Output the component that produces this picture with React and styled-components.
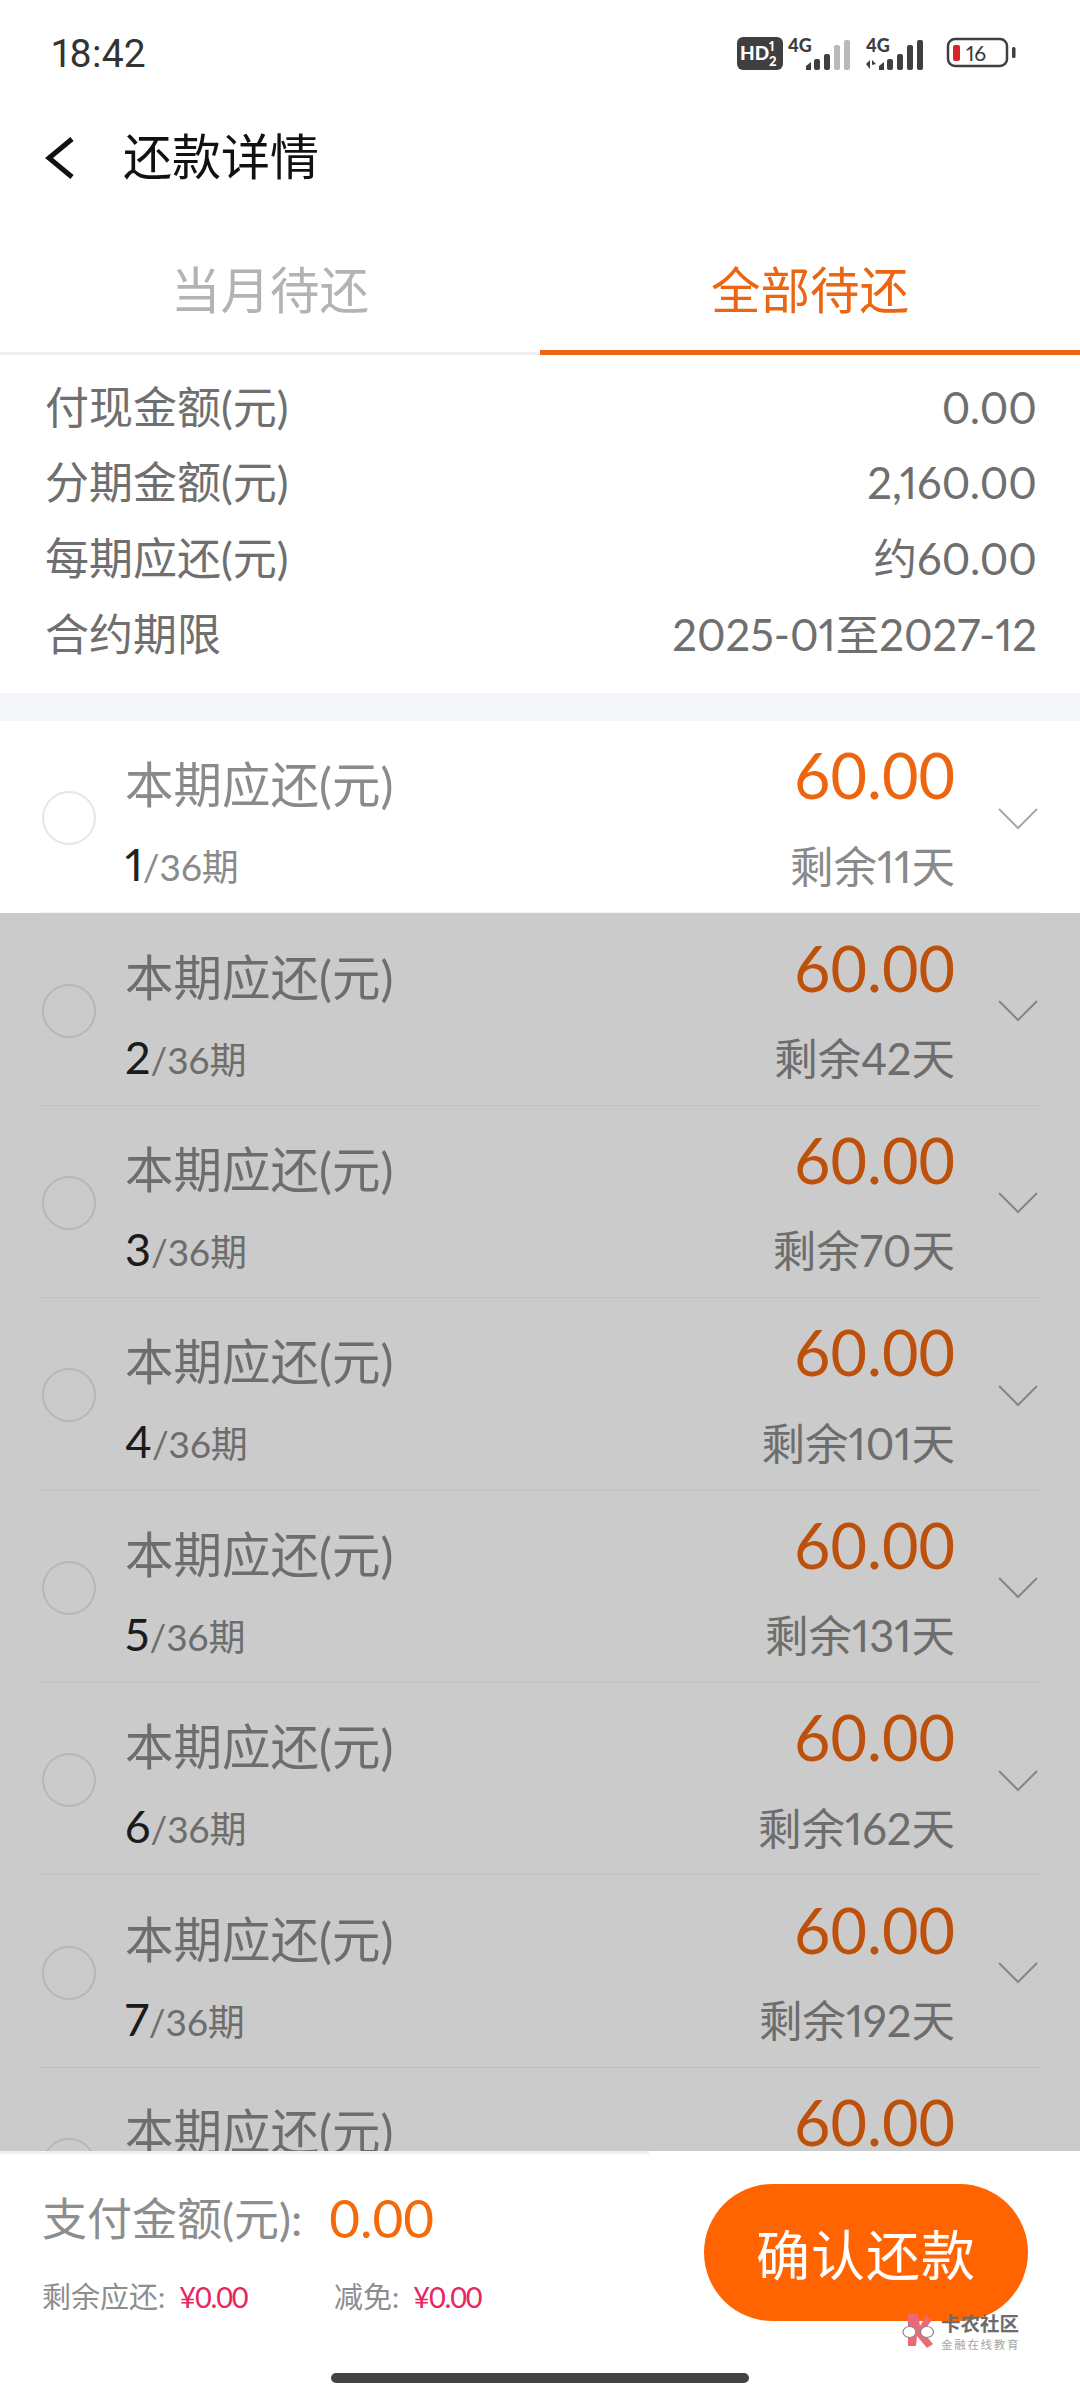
import React from "react";
import styled, { createGlobalStyle } from "styled-components";

const Global = createGlobalStyle`
  html, body { margin: 0; padding: 0; background: #fff; }
  * { box-sizing: border-box; }
`;

const FONT = `"Lato", "Noto Sans CJK SC", sans-serif`;

const Page = styled.div`
  position: relative;
  width: 1080px;
  height: 2400px;
  display: flex;
  flex-direction: column;
  overflow: hidden;
  background: #fff;
  font-family: ${FONT};
  font-variant-numeric: proportional-nums;
`;

const StatusBar = styled.div`
  height: 108px;
  flex: none;
  display: flex;
  align-items: center;
  justify-content: space-between;
  padding: 0 64px 0 52px;
`;

const Clock = styled.span`
  font-family: "Roboto", sans-serif;
  font-size: 39px;
  color: #333;
  letter-spacing: 0.2px;
`;

const StatusSvg = styled.svg`
  display: block;
  flex: none;
`;

const NavBar = styled.div`
  height: 98px;
  flex: none;
  display: flex;
  align-items: center;
  padding-left: 45px;
  gap: 48px;
`;

const NavTitle = styled.span`
  font-size: 49px;
  line-height: 60px;
  color: #111;
  margin-top: -2px;
`;

const BackIcon = styled.svg`
  display: block;
  flex: none;
  margin-top: 2px;
`;

const Tabs = styled.div`
  height: 149px;
  flex: none;
  display: flex;
  align-items: stretch;
`;

const Tab = styled.div`
  width: 50%;
  padding-top: 52px;
  text-align: center;
  font-size: 49.5px;
  line-height: 64px;
  color: ${(p) => (p.$active ? "#ec6513" : "#b3b3b3")};
  border-bottom: ${(p) => (p.$active ? "5px solid #ec6513" : "3px solid #f0f0f0")};
`;

const Summary = styled.div`
  flex: none;
  height: 338px;
  padding: 14px 43px 0 45px;
`;

const SummaryRow = styled.div`
  height: 75.6px;
  display: flex;
  align-items: center;
  justify-content: space-between;
  font-size: 44px;
  line-height: 56px;
  color: #6f6f6f;
`;

const SummaryValue = styled.span`
  font-size: 43.5px;
`;

const Band = styled.div`
  height: 28px;
  flex: none;
  background: #f4f6f9;
`;

const ListArea = styled.div`
  position: relative;
  flex: 1;
  min-height: 0;
  overflow: hidden;
`;

const Dim = styled.div`
  position: absolute;
  inset: 192px 0 0 0;
  background: rgba(0, 0, 0, 0.205);
`;

const Row = styled.div`
  position: relative;
  height: 192.4px;
  display: flex;
  align-items: center;
  padding: 0 42px;
  &::after {
    content: "";
    position: absolute;
    left: 40px;
    right: 40px;
    bottom: 0;
    height: 1px;
    background: #f2f2f2;
  }
`;

const Radio = styled.span`
  flex: none;
  width: 54px;
  height: 54px;
  margin-top: 2px;
  border-radius: 50%;
  border: 2px solid #e6e6e6;
  background: #fff;
`;

const RowMain = styled.div`
  flex: 1;
  margin-left: 29px;
  display: flex;
  flex-direction: column;
`;

const RowLine = styled.div`
  display: flex;
  align-items: center;
  justify-content: space-between;
  height: ${(p) => p.$h}px;
`;

const RowLabel = styled.span`
  font-size: 48.5px;
  line-height: 60px;
  color: #8a8a8a;
  margin-top: 10px;
`;

const RowAmount = styled.span`
  font-size: 63px;
  line-height: 70px;
  font-weight: 400;
  font-variant-numeric: tabular-nums;
  color: #ee650f;
  margin-top: -8px;
  margin-right: -1px;
`;

const Period = styled.span`
  font-size: 37px;
  line-height: 50px;
  color: #8a8a8a;
  margin-top: 13px;
  b {
    font-weight: 400;
    font-size: 45px;
    color: #222;
  }
`;

const Remain = styled.span`
  font-size: 43.5px;
  line-height: 54px;
  color: #8a8a8a;
  margin-top: 13px;
  margin-right: -1px;
`;

const Chevron = styled.svg`
  flex: none;
  width: 40px;
  height: 22px;
  margin-left: 44px;
  margin-top: 3px;
`;

const Footer = styled.div`
  position: relative;
  flex: none;
  height: 249px;
  padding-top: 33px;
  background: #fff;
`;

const FooterRule = styled.div`
  position: absolute;
  left: 0;
  top: 0;
  width: 649px;
  height: 3px;
  background: #efefef;
`;

const FooterBody = styled.div`
  height: 137px;
  display: flex;
  align-items: flex-start;
  justify-content: space-between;
  padding: 0 52px 0 42px;
`;

const FooterInfo = styled.div`
  display: flex;
  flex-direction: column;
`;

const PayLine = styled.div`
  height: 70px;
  display: flex;
  align-items: center;
`;

const PayLabel = styled.span`
  font-size: 45px;
  line-height: 56px;
  color: #8d8d8d;
`;

const PayAmount = styled.span`
  font-size: 53px;
  line-height: 66px;
  font-variant-numeric: tabular-nums;
  color: #f46a08;
  margin-left: 27px;
  margin-top: -2px;
`;

const SubLine = styled.div`
  display: flex;
  height: 86px;
  align-items: center;
  font-size: 29px;
  line-height: 40px;
  color: #8d8d8d;
`;

const SubItem = styled.span`
  width: 292px;
  display: inline-flex;
  gap: 14px;
`;

const Money = styled.span`
  color: #e6285f;
  font-variant-numeric: tabular-nums;
  letter-spacing: -1.2px;
`;

const ConfirmButton = styled.button`
  width: 324px;
  height: 137px;
  border: 0;
  border-radius: 69px;
  background: #ff6400;
  color: #fff;
  font-family: ${FONT};
  font-size: 54px;
  letter-spacing: 1px;
  padding: 0;
`;

const HomeBar = styled.div`
  width: 418px;
  height: 10px;
  margin: 52px auto 0;
  border-radius: 5px;
  background: #444;
`;

const Stamp = styled.div`
  position: absolute;
  left: 902px;
  top: 2313px;
  display: flex;
  gap: 5px;
  pointer-events: none;
`;

const StampText = styled.div`
  display: flex;
  flex-direction: column;
  line-height: 1;
`;

const StampName = styled.span`
  font-size: 19.5px;
  font-weight: 700;
  color: #6c6c6c;
  margin-top: 1px;
`;

const StampSub = styled.span`
  font-size: 11.5px;
  letter-spacing: 1.7px;
  color: #a5a5a5;
  margin-top: 5px;
`;

function StatusIcons() {
  const bar = (x, h, fill) => <rect key={x} x={x} y={34 - h} width="6" height={h} rx="2" fill={fill} />;
  return (
    <StatusSvg width="279" height="44" viewBox="0 -4 279 44">
      <rect x="0" y="1" width="46" height="33" rx="6" fill="#3f3f3f" />
      <text x="3" y="24" fontFamily="Lato, sans-serif" fontWeight="900" fontSize="19" fill="#fff">HD</text>
      <text x="32" y="15" fontFamily="Lato, sans-serif" fontWeight="900" fontSize="13" fill="#fff">1</text>
      <text x="32" y="30" fontFamily="Lato, sans-serif" fontWeight="900" fontSize="13" fill="#fff">2</text>
      <text x="51" y="16" fontFamily="Lato, sans-serif" fontWeight="900" fontSize="18" fill="#3f3f3f">4G</text>
      <path d="M69 34v-4l5-4v8z" fill="#3f3f3f" />
      {bar(77, 11, "#3f3f3f")}
      {bar(87, 16, "#3f3f3f")}
      {bar(97, 25, "#b9b9b9")}
      {bar(107, 30, "#b9b9b9")}
      <text x="129" y="16" fontFamily="Lato, sans-serif" fontWeight="900" fontSize="18" fill="#3f3f3f">4G</text>
      <path d="M129 28l4-4v9zM135 24l4 4-4 1v4z" fill="#3f3f3f" />
      <path d="M142 34v-4l5-4v8z" fill="#3f3f3f" />
      {bar(150, 11, "#3f3f3f")}
      {bar(160, 16, "#3f3f3f")}
      {bar(170, 25, "#3f3f3f")}
      {bar(180, 30, "#3f3f3f")}
      <rect x="211" y="3" width="59" height="27" rx="7" fill="none" stroke="#3f3f3f" strokeWidth="2.5" />
      <rect x="216" y="9" width="7" height="16" rx="2" fill="#d8232a" />
      <text x="229" y="25" fontFamily="Lato, sans-serif" fontSize="21" fill="#3a3a3a">16</text>
      <rect x="275" y="11" width="3.5" height="11" rx="1.5" fill="#3f3f3f" />
    </StatusSvg>
  );
}

function BackArrow() {
  return (
    <BackIcon width="30" height="44" viewBox="0 0 30 44">
      <path d="M27 3L4 22l23 19" fill="none" stroke="#111" strokeWidth="5" />
    </BackIcon>
  );
}

function StampLogo() {
  return (
    <svg width="34" height="35" viewBox="0 0 34 35">
      <path d="M6 1h10l2 12 6-10 6 4-9 12 10 12-6 4-10-12-1 10H6z" fill="#ea6a78" />
      <ellipse cx="7.5" cy="19" rx="6.5" ry="5.5" fill="#fff" stroke="#888" strokeWidth="1.2" />
      <ellipse cx="25" cy="19" rx="6.5" ry="5.5" fill="#fff" stroke="#888" strokeWidth="1.2" />
    </svg>
  );
}

const SUMMARY = [
  ["付现金额(元)", "0.00"],
  ["分期金额(元)", "2,160.00"],
  ["每期应还(元)", "约60.00"],
  ["合约期限", "2025-01至2027-12"],
];

const DAYS = [11, 42, 70, 101, 131, 162, 192, 223];

export default function App() {
  return (
    <Page>
      <Global />
      <StatusBar>
        <Clock>18:42</Clock>
        <StatusIcons />
      </StatusBar>
      <NavBar>
        <BackArrow />
        <NavTitle>还款详情</NavTitle>
      </NavBar>
      <Tabs>
        <Tab>当月待还</Tab>
        <Tab $active>全部待还</Tab>
      </Tabs>
      <Summary>
        {SUMMARY.map(([label, value]) => (
          <SummaryRow key={label}>
            <span>{label}</span>
            <SummaryValue>{value}</SummaryValue>
          </SummaryRow>
        ))}
      </Summary>
      <Band />
      <ListArea>
        {DAYS.map((d, i) => (
          <Row key={d}>
            <Radio />
            <RowMain>
              <RowLine $h={84}>
                <RowLabel>本期应还(元)</RowLabel>
                <RowAmount>60.00</RowAmount>
              </RowLine>
              <RowLine $h={76}>
                <Period>
                  <b>{i + 1}</b>/36期
                </Period>
                <Remain>剩余{d}天</Remain>
              </RowLine>
            </RowMain>
            <Chevron viewBox="0 0 40 22">
              <path d="M1 1l19 19L39 1" fill="none" stroke="#a8a8a8" strokeWidth="2" />
            </Chevron>
          </Row>
        ))}
        <Dim />
      </ListArea>
      <Footer>
        <FooterRule />
        <FooterBody>
          <FooterInfo>
            <PayLine>
              <PayLabel>支付金额(元):</PayLabel>
              <PayAmount>0.00</PayAmount>
            </PayLine>
            <SubLine>
              <SubItem>
                剩余应还:<Money>¥0.00</Money>
              </SubItem>
              <SubItem>
                减免:<Money>¥0.00</Money>
              </SubItem>
            </SubLine>
          </FooterInfo>
          <ConfirmButton>确认还款</ConfirmButton>
        </FooterBody>
        <HomeBar />
      </Footer>
      <Stamp>
        <StampLogo />
        <StampText>
          <StampName>卡农社区</StampName>
          <StampSub>金融在线教育</StampSub>
        </StampText>
      </Stamp>
    </Page>
  );
}
